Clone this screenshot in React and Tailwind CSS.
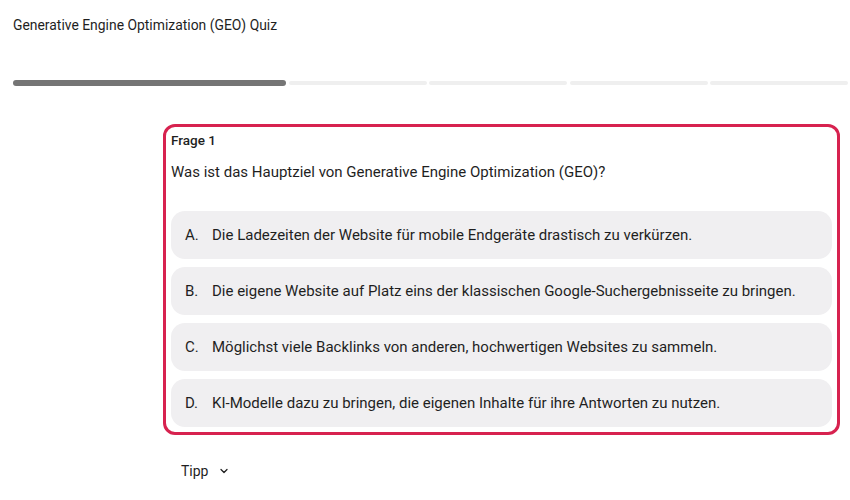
import React from "react";

const options = [
  ["A.", "Die Ladezeiten der Website für mobile Endgeräte drastisch zu verkürzen."],
  ["B.", "Die eigene Website auf Platz eins der klassischen Google-Suchergebnisseite zu bringen."],
  ["C.", "Möglichst viele Backlinks von anderen, hochwertigen Websites zu sammeln."],
  ["D.", "KI-Modelle dazu zu bringen, die eigenen Inhalte für ihre Antworten zu nutzen."],
];

export default function App() {
  return (
    <div className="w-[850px] h-[500px] bg-white overflow-hidden text-[#1f1f1f] [font-family:Roboto,'Noto_Sans',sans-serif]">
      <div className="pt-[16px] pl-[13px] text-[13.9px] leading-[18px]">
        Generative Engine Optimization (GEO) Quiz
      </div>
      <div className="mt-[46px] pl-[13px] pr-[2px] flex items-center gap-[2.5px]">
        <div className="w-[273px] h-[6px] rounded-full bg-[#757575]" />
        <div className="flex-1 h-[4px] rounded-full bg-[#efefef]" />
        <div className="flex-1 h-[4px] rounded-full bg-[#efefef]" />
        <div className="flex-1 h-[4px] rounded-full bg-[#efefef]" />
        <div className="flex-1 h-[4px] rounded-full bg-[#efefef]" />
      </div>
      <div className="mt-[38px] ml-[163px] mr-[10px] border-[3px] border-[#d7224f] rounded-[12px] p-[5px]">
        <div className="text-[13.5px] leading-[16px] font-medium">Frage 1</div>
        <div className="mt-[14px] text-[15px] leading-[20px]">
          Was ist das Hauptziel von Generative Engine Optimization (GEO)?
        </div>
        <div className="mt-[29px] flex flex-col gap-[8px]">
          {options.map(([l, t]) => (
            <div key={l} className="h-[48px] rounded-[14px] bg-[#f0eff1] flex items-center pl-[14px] text-[15px]">
              <span className="w-[27px] shrink-0">{l}</span>
              <span>{t}</span>
            </div>
          ))}
        </div>
      </div>
      <div className="mt-[26px] ml-[181px] flex items-center gap-[10px] text-[14px] leading-[20px]">
        <span>Tipp</span>
        <svg width="12" height="12" viewBox="0 0 24 24" fill="none" stroke="#1f1f1f" strokeWidth="2.5" strokeLinecap="round" strokeLinejoin="round">
          <path d="M6 9l6 6 6-6" />
        </svg>
      </div>
    </div>
  );
}
